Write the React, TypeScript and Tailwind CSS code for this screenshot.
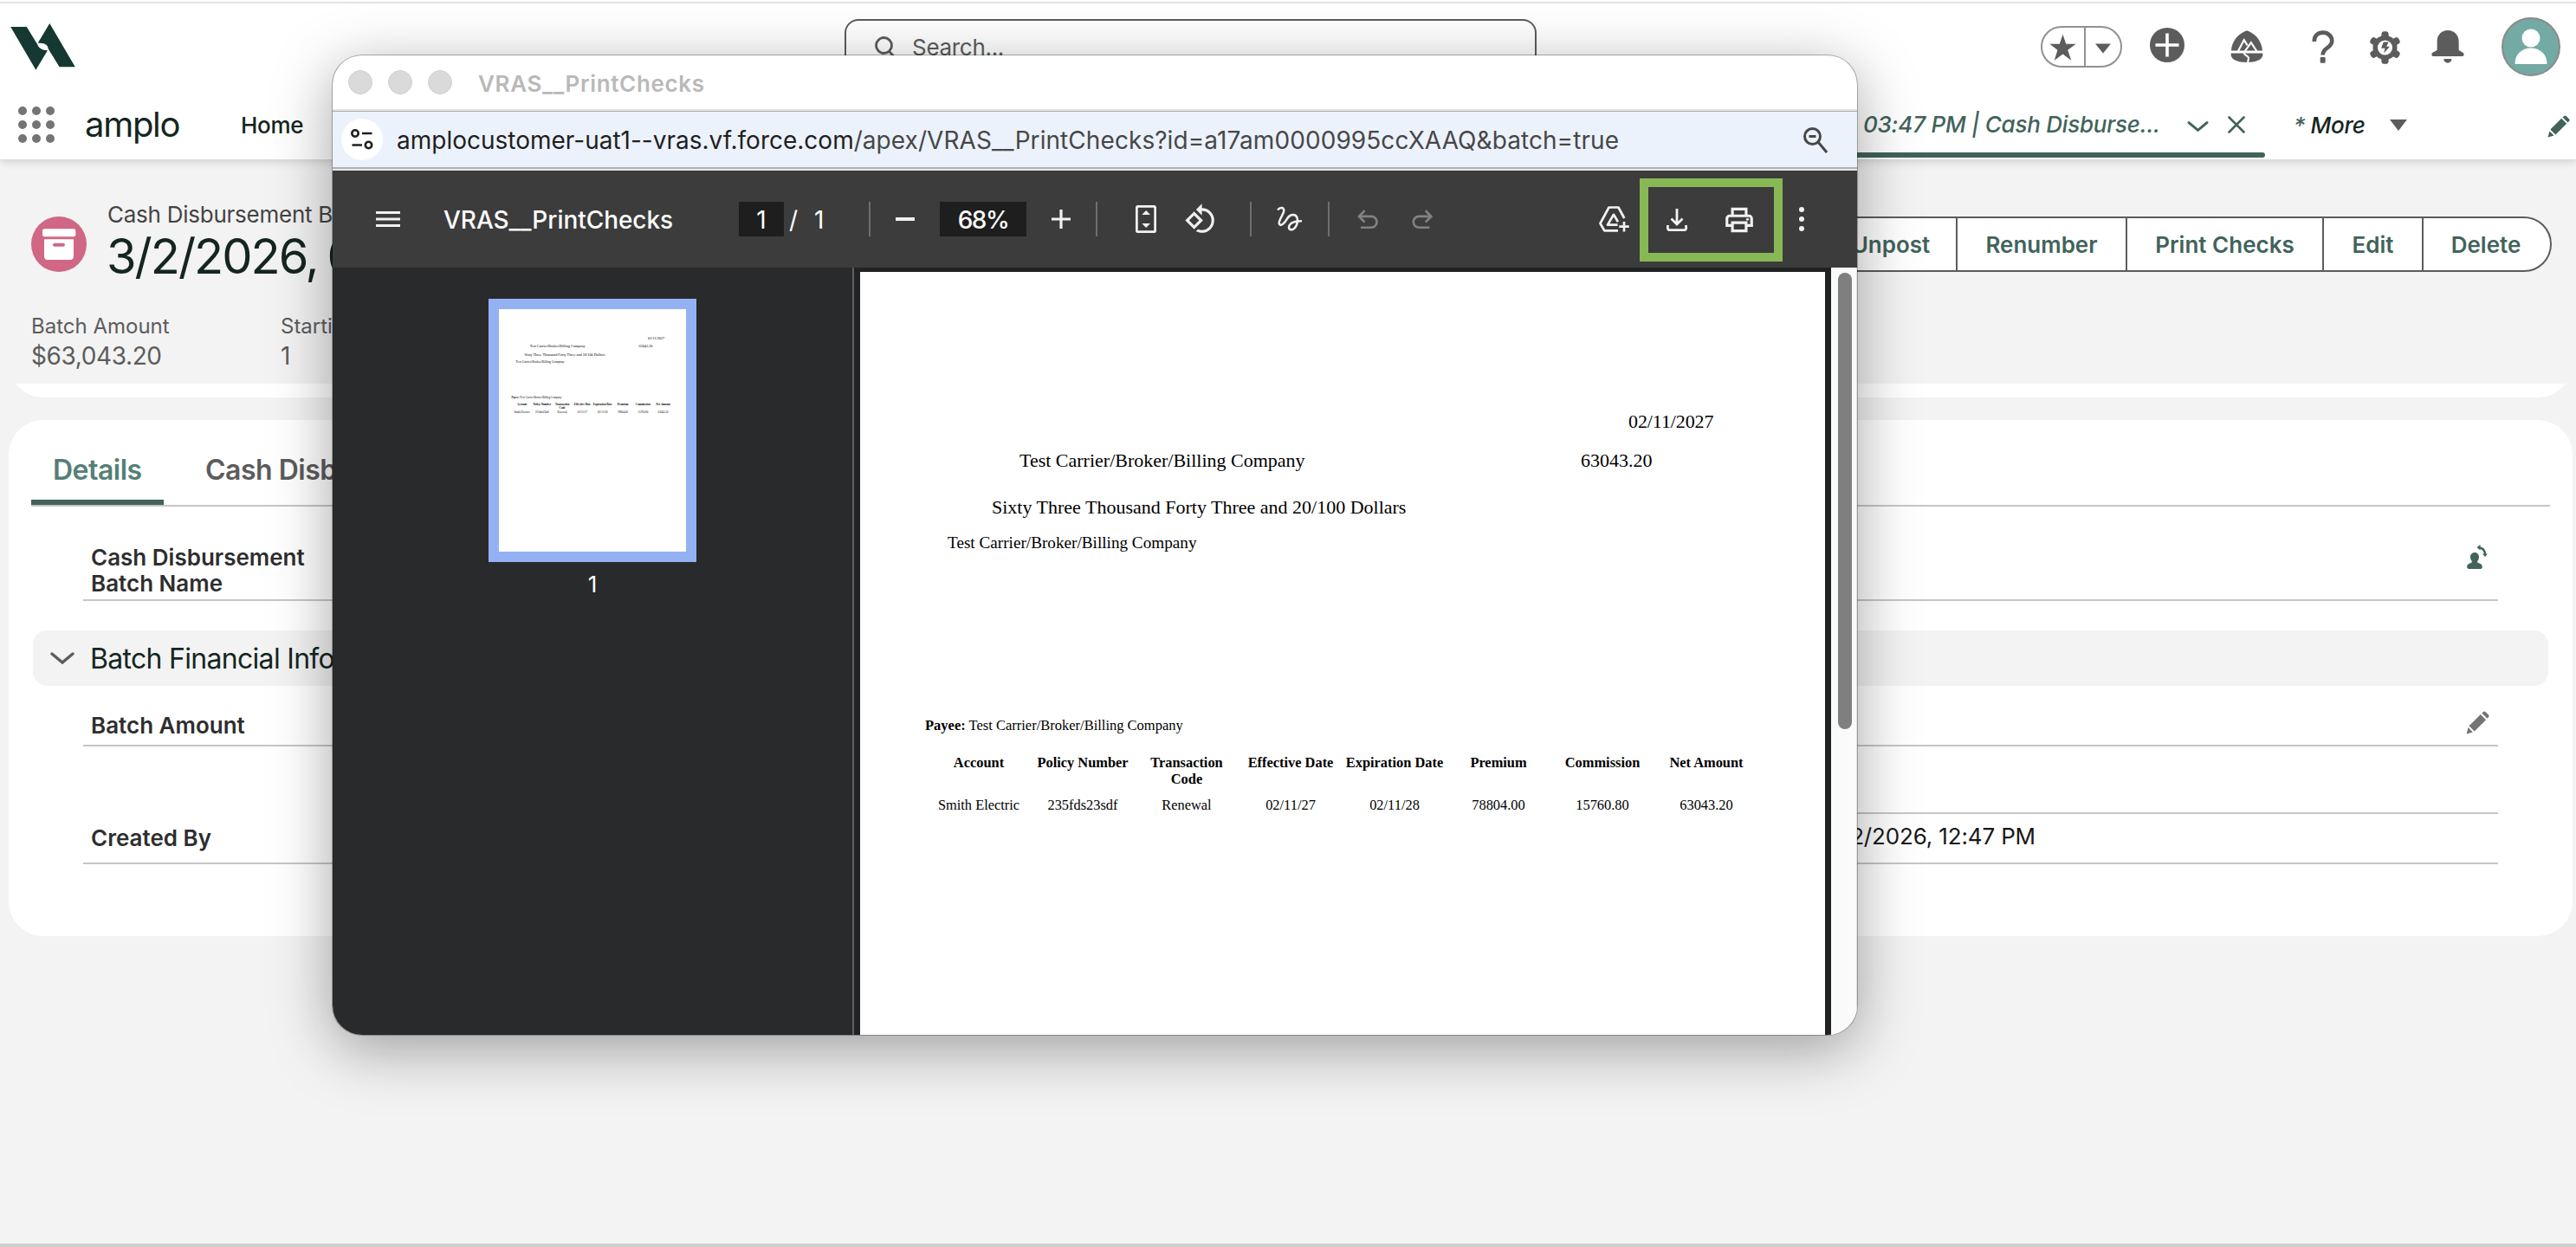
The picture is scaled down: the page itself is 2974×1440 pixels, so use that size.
import clsx from 'clsx'
import { MdOutlinePrint, MdRotate90DegreesCcw } from 'react-icons/md'

const columns = [
  { label: 'Account', value: 'Smith Electric' },
  { label: 'Policy Number', value: '235fds23sdf' },
  { label: 'Transaction Code', value: 'Renewal' },
  { label: 'Effective Date', value: '02/11/27' },
  { label: 'Expiration Date', value: '02/11/28' },
  { label: 'Premium', value: '78804.00' },
  { label: 'Commission', value: '15760.80' },
  { label: 'Net Amount', value: '63043.20' },
]

const actions = [
  { label: 'Unpost', width: 'w-[150px]' },
  { label: 'Renumber', width: 'w-[196px]' },
  { label: 'Print Checks', width: 'w-[227px]' },
  { label: 'Edit', width: 'w-[115px]' },
  { label: 'Delete', width: 'w-[148px]' },
]

function Pencil({ className }: { className?: string }) {
  return (
    <svg viewBox="0 0 26 26" fill="currentColor" className={className}>
      <path d="M.6 25.4l1.8-7 5.2 5.2z" />
      <path d="M3.4 16.6L16.2 3.8l6 6L9.4 22.6z" />
      <path d="M17.6 2.4L19.2.9c.8-.7 1.7-.7 2.4 0l3.5 3.5c.7.7.7 1.6 0 2.4l-1.5 1.6z" />
    </svg>
  )
}

function ChevronDown({ className }: { className?: string }) {
  return (
    <svg viewBox="0 0 28 16" fill="none" stroke="currentColor" strokeWidth="3.4" strokeLinecap="round" className={className}>
      <path d="M2 3l12 10L26 3" />
    </svg>
  )
}

function Logo() {
  return (
    <svg viewBox="38 81 225 163" fill="#163832" className="ml-[12px] h-[54px] w-[75px]">
      <path d="M38 93h56l38 62c4 12 15 20 35 20l-41 68z" />
      <path d="M174 81l89 152h-55l-39-64c0-12-12-22-36-19z" />
    </svg>
  )
}

function GlobalHeader() {
  return (
    <div className="flex h-[100px] items-center text-[#5c5c5c]">
      <Logo />
      <div className="ml-[888px] flex h-16 w-[799px] items-center rounded-2xl border-2 border-[#5c5c5c] bg-white">
        <svg viewBox="0 0 24 24" fill="none" stroke="currentColor" strokeWidth="2.8" className="ml-[32px] size-6">
          <circle cx="11.5" cy="10.5" r="9" />
          <path d="M17.5 17.5l5 5" />
        </svg>
        <span className="ml-[20px] text-[26px] tracking-[-0.3px]">Search...</span>
      </div>

      <div className="ml-[582px] flex h-12 w-[94px] rounded-full border-2 border-[#919191]">
        <div className="flex w-[50px] items-center border-r-2 border-[#919191] pl-[8px]">
          <svg viewBox="80 86 92 92" fill="currentColor" className="size-[31px]">
            <path d="M126 88l11 33h34l-28 21 12 35-29-21-29 21 11-35-27-21h34z" />
          </svg>
        </div>
        <svg viewBox="0 0 18 11" fill="currentColor" className="ml-[11px] mt-[18px] h-[12px] w-[18px]">
          <path d="M0 0h18L9 11z" />
        </svg>
      </div>

      <svg viewBox="0 0 40 40" className="mb-1 ml-[32px] size-10">
        <circle cx="20" cy="20" r="20" fill="#5c5c5c" />
        <path d="M20 6.5v27M6.5 20h27" stroke="#fff" strokeWidth="3.6" />
      </svg>

      <svg viewBox="704 76 116 114" className="ml-[53px] size-[38px]">
        <path d="M707 147c2-36 26-60 55-71 30 11 52 35 55 71zM706 156h112v7c-2 16-24 25-56 25s-54-9-56-25z" fill="#5c5c5c" />
        <path d="M731 149l21-40 12 19M755 149l22-31 20 31M752 154c-1 10 18 10 16 21l-3 14" fill="none" stroke="#fff" strokeWidth="6.5" />
      </svg>

      <svg viewBox="988 74 78 115" className="ml-[56px] h-[38px] w-[26px]">
        <path d="M996 113c0-20 13-31 31-31s31 13 31 29c0 26-32 22-32 49" fill="none" stroke="#5c5c5c" strokeWidth="14" />
        <rect x="1017" y="168" width="18" height="20" rx="3" fill="#5c5c5c" />
      </svg>

      <svg viewBox="1188 80 108 110" className="ml-[40px] mt-0.5 h-[38px] w-[37px]">
        <g fill="#5c5c5c">
          <rect x="1230" y="80" width="24" height="110" rx="10" />
          <rect x="1230" y="80" width="24" height="110" rx="10" transform="rotate(60 1242 135)" />
          <rect x="1230" y="80" width="24" height="110" rx="10" transform="rotate(120 1242 135)" />
          <circle cx="1242" cy="135" r="41" />
        </g>
        <circle cx="1242" cy="135" r="25" fill="#fff" />
        <path d="M1237 116h17l-7 15h11l-20 23 4-17h-13z" fill="#5c5c5c" />
      </svg>

      <svg viewBox="1402 75 112 114" fill="currentColor" className="ml-[35px] size-[38px]">
        <path d="M1421 142v-29c0-22 16-38 37-38s38 16 38 38v29c0 6 18 8 18 16 0 5-3 7-8 7h-96c-5 0-8-2-8-7 0-8 19-10 19-16zM1444 174h27c1 8-7 14-13 14-7 0-14-6-14-14z" />
      </svg>

      <svg viewBox="0 0 68 68" className="ml-[43px] size-[68px]">
        <circle cx="34" cy="34" r="33" fill="#73aaa4" stroke="#8a8a8a" strokeWidth="2" />
        <circle cx="34" cy="24" r="10.5" fill="#fff" />
        <path d="M15.5 53c0-10 8-17.5 18.5-17.5S52.5 43 52.5 53c0 .6-.4 1-1 1h-35c-.6 0-1-.4-1-1z" fill="#fff" />
      </svg>
    </div>
  )
}

function NavBar() {
  return (
    <div className="flex h-20 items-center text-[26px] font-medium">
      <div className="ml-[21px] grid grid-cols-3 gap-[6px]">
        {Array.from({ length: 9 }, (_, i) => (
          <span key={i} className="size-[10px] rounded-full bg-[#747474]" />
        ))}
      </div>
      <span className="ml-[35px] w-[180px] text-[40px] font-normal tracking-[-1.3px] text-[#14261f]">amplo</span>
      <span className="w-[1870px] tracking-[-0.3px] text-[#14261f]">Home</span>

      <div className="-ml-[100px] flex h-full w-[567px] flex-col justify-end pb-[2px]">
        <div className="flex min-h-0 flex-1 items-center pl-[103px] pt-[7px] text-[#41635b]">
          <span className="w-[374px] italic tracking-[-0.22px]">03:47 PM | Cash Disburse...</span>
          <ChevronDown className="mt-1 h-[14px] w-[25px]" />
          <svg viewBox="0 0 20 20" stroke="currentColor" strokeWidth="2.6" strokeLinecap="round" className="ml-[22px] size-5 shrink-0">
            <path d="M1.5 1.5l17 17M18.5 1.5l-17 17" />
          </svg>
        </div>
        <div className="h-[6px] shrink-0 rounded-r-full bg-[#41635b]" />
      </div>

      <span className="ml-[33px] mt-px italic text-[#41635b]">*</span>
      <span className="ml-[6px] mt-px italic tracking-[-0.3px] text-[#14261f]">More</span>
      <svg viewBox="0 0 20 13" fill="#5c5c5c" className="ml-[29px] h-[13px] w-5">
        <path d="M0 0h20L10 13z" />
      </svg>
      <Pencil className="ml-auto mr-[7px] mt-1 size-[26px] text-[#41635b]" />
    </div>
  )
}

function RecordHeader() {
  return (
    <>
      <div className="flex pt-12">
        <svg viewBox="108 750 192 192" className="ml-[36px] mt-[18px] size-16">
          <circle cx="204" cy="846" r="96" fill="#d06785" />
          <rect x="147" y="793" width="115" height="27" rx="7" fill="#fff" />
          <path d="M153 829h102v59c0 7-4 12-11 12h-80c-7 0-11-5-11-12z" fill="#fff" />
          <rect x="183" y="842" width="42" height="12" rx="6" fill="#d06785" />
        </svg>
        <div className="ml-[24px]">
          <div className="text-[26px] leading-8 tracking-[-0.25px] text-[#444]">Cash Disbursement Batch</div>
          <div className="ml-[-1px] text-[56px] leading-[64px] tracking-[-2px] text-[#14261f] [word-spacing:-3px]">3/2/2026, 03:47 PM</div>
        </div>
        <div className="ml-auto mr-[28px] mt-[18px] flex h-16 overflow-hidden rounded-r-full border-2 border-[#5c5c5c] bg-white">
          {actions.map((action, i) => (
            <button
              key={action.label}
              className={clsx(
                'text-[26px] font-semibold text-[#41635b]',
                i > 0 && 'border-l-2 border-[#5c5c5c]',
                i === actions.length - 1 && 'pr-[2px]',
                action.width,
              )}
            >
              {action.label}
            </button>
          ))}
        </div>
      </div>
      <div className="mt-[33px] flex text-[#5c5c5c]">
        <div className="ml-[36px] w-[288px]">
          <div className="text-2xl leading-8">Batch Amount</div>
          <div className="text-[28px] leading-9 tracking-[-0.4px]">$63,043.20</div>
        </div>
        <div>
          <div className="text-2xl leading-8">Starting Check Number</div>
          <div className="text-[28px] leading-9">1</div>
        </div>
      </div>
    </>
  )
}

function Label({ children, className }: { children: React.ReactNode; className?: string }) {
  return (
    <div className={clsx('border-b-2 border-[#c6c6c6] pl-[9px] text-[26px] font-semibold leading-[30px] text-[#2e2e2e]', className)}>
      {children}
    </div>
  )
}

function DetailsCard() {
  return (
    <div className="mx-[10px] mr-1 mt-[26px] h-[596px] rounded-[40px] bg-white pt-[38px]">
      <div className="mx-[26px] flex border-b-2 border-[#c6c6c6] text-[32px] font-semibold leading-10 tracking-[-0.5px]">
        <div className="w-[153px] border-b-[6px] border-[#41635b] pb-[14px] pl-[25px] text-[#547f77]">Details</div>
        <div className="ml-[48px] text-[#5c5c5c]">Cash Disbursements</div>
      </div>

      <div className="ml-[86px] mr-[86px] mt-11 grid grid-cols-2">
        <Label className="pb-[3px]">
          Cash Disbursement
          <br />
          Batch Name
        </Label>
        <div className="flex justify-end border-b-2 border-[#c6c6c6] pr-[12px]">
          <svg viewBox="0 0 24 28" fill="#41635b" className="h-[28px] w-6">
            <path d="M9 9c3 0 5 2.4 5 5.2 0 2-.8 3.6-1.8 4.8v1.6c2.4 1 5.6 2 5.6 5 0 1.2-.6 2.4-2 2.4H2.2C1 28 .2 27 .2 25.6c0-3 3.2-4 5.6-5V19C4.8 17.8 4 16.2 4 14.2 4 11.4 6 9 9 9z" />
            <path d="M14 3.2c4 .6 6.8 3.6 7 8" fill="none" stroke="#41635b" strokeWidth="2.4" />
            <path d="M15.5 0v6.4L11.5 3zM18 10.5h6L21 14z" />
          </svg>
        </div>
      </div>

      <div className="mx-[28px] mt-[34px] flex h-16 items-center rounded-2xl bg-[#f3f3f3]">
        <ChevronDown className="ml-[20px] h-4 w-7 text-[#5c5c5c]" />
        <span className="ml-[18px] pt-[2px] text-[32px] tracking-[-0.7px] text-[#14261f]">Batch Financial Information</span>
      </div>

      <div className="ml-[86px] mr-[86px] mt-[31px] grid grid-cols-2">
        <Label className="pb-[7px]">Batch Amount</Label>
        <div className="flex justify-end border-b-2 border-[#c6c6c6] pr-[10px]">
          <Pencil className="-mt-0.5 size-[27px] text-[#747474]" />
        </div>
        <div className="h-[78px]" />
        <div className="border-b-2 border-[#c6c6c6]" />
        <Label className="pb-[13px] pt-[13px]">Created By</Label>
        <div className="border-b-2 border-[#c6c6c6] pl-[621px] pt-[11px] text-[26px] leading-[30px] tracking-[-0.15px] text-[#181818]">
          3/2/2026, 12:47 PM
        </div>
      </div>
    </div>
  )
}

// Check stub, drawn at 1114px wide and scaled down for the sidebar thumbnail
function CheckPage({ className }: { className?: string }) {
  return (
    <div className={clsx("h-[1444px] w-[1114px] shrink-0 bg-white pt-[161px] font-['Liberation_Serif',serif] text-[22px] leading-6 text-black", className)}>
      <div className="pl-[887px] tracking-[-0.1px]">02/11/2027</div>
      <div className="mt-[21px] flex">
        <span className="ml-[184px] w-[648px]">Test Carrier/Broker/Billing Company</span>
        <span>63043.20</span>
      </div>
      <div className="mt-[30px] pl-[152px]">Sixty Three Thousand Forty Three and 20/100 Dollars</div>
      <div className="mt-[17px] pl-[101px] text-[19.2px]">Test Carrier/Broker/Billing Company</div>
      <div className="mt-[189px] pl-[75px] text-[16.5px] leading-5">
        <b>Payee:</b> Test Carrier/Broker/Billing Company
      </div>
      <div className="ml-[77px] mt-[23px] grid w-[960px] grid-cols-8 text-center text-[16.4px]">
        {columns.map((c) => (
          <div key={c.label} className="whitespace-normal px-[2px] font-bold leading-[19px]">
            {c.label}
          </div>
        ))}
        {columns.map((c) => (
          <div key={c.label} className="mt-[11px] leading-5">
            {c.value}
          </div>
        ))}
      </div>
    </div>
  )
}

function Divider({ className }: { className?: string }) {
  return <div className={clsx('h-10 w-[2px] shrink-0 bg-[#6e6e6e]', className)} />
}

function PdfToolbar() {
  return (
    <div className="flex h-[112px] items-center bg-[#3c3c3c] text-[28px] font-medium text-white">
      <svg viewBox="0 0 28 18" stroke="#f1f1f1" strokeWidth="3" className="ml-[50px] h-[18px] w-7">
        <path d="M0 1.5h28M0 9h28M0 16.5h28" />
      </svg>
      <span className="ml-[50px] w-[341px] pt-[2px] tracking-[-0.05px]">VRAS__PrintChecks</span>
      <div className="flex h-10 w-[52px] items-center justify-center bg-[#1e1e1e] pt-px font-normal">1</div>
      <div className="flex w-[98px] pl-[6px] pt-px font-normal">
        <span className="w-[29px]">/</span>
        <span>1</span>
      </div>
      <Divider />
      <div className="ml-[29px] h-[4px] w-[22px] bg-[#f1f1f1]" />
      <div className="ml-[29px] flex h-10 w-[100px] items-center justify-center bg-[#1e1e1e] pt-px tracking-[-1.5px]">68%</div>
      <svg viewBox="0 0 22 22" stroke="#f1f1f1" strokeWidth="3.2" className="ml-[29px] size-[22px]">
        <path d="M11 0v22M0 11h22" />
      </svg>
      <Divider className="ml-[29px]" />

      <svg viewBox="93 54 72 96" fill="#f1f1f1" className="ml-[44px] h-8 w-6">
        <rect x="97" y="58" width="64" height="88" rx="5" fill="none" stroke="#f1f1f1" strokeWidth="8.5" />
        <path d="M115 87h29l-14.5-15zM115 117h29l-14.5 15z" />
      </svg>
      <MdRotate90DegreesCcw className="ml-[32px] size-[38px] text-[#f1f1f1]" />
      <Divider className="ml-[38px]" />

      <svg viewBox="580 55 95 95" fill="none" stroke="#f1f1f1" strokeWidth="7.5" className="ml-[28px] size-8">
        <path d="M586 71c9-10 24-10 21 6-4 14-17 28-16 41 4 12 18 0 27-16 10-18 30-18 35-4 4 18-5 38-18 41-13 0-13-12-5-20 9-9 22-10 39-10" />
      </svg>
      <Divider className="ml-[28px]" />

      <svg viewBox="855 65 85 80" fill="none" stroke="#828282" strokeWidth="8" className="ml-[30px] h-[27px] w-[28px]">
        <path d="M873 133h37a19.5 19.5 0 0 0 0-39h-44M887 74l-20 20 20 20" />
      </svg>
      <svg viewBox="1045 65 85 80" fill="none" stroke="#828282" strokeWidth="8" className="ml-[35px] h-[27px] w-[28px]">
        <path d="M1113 133h-37a19.5 19.5 0 0 1 0-39h44M1099 74l20 20-20 20" />
      </svg>

      <svg viewBox="0 0 35 30" fill="none" stroke="#f1f1f1" strokeWidth="2.7" strokeLinejoin="round" className="ml-[190px] h-[30px] w-[35px]">
        <path d="M29.3 14L22.5 1.5h-11L1.5 20l4.8 8.4H22" />
        <path d="M22 18.2L17 9.8l-7 11.8h11.5" />
        <path d="M29 18v11.5M23.3 23.7h11.5" />
      </svg>
      <div className="ml-[12px] mt-[2px] flex h-24 w-[165px] items-center border-[10px] border-[#88b854]">
        <svg viewBox="0 0 24 26" fill="none" stroke="#f1f1f1" strokeWidth="2.8" className="ml-[20px] size-[26px]">
          <path d="M12 0v17M5.5 11.5l6.5 6.5 6.5-6.5M1.4 19v3.6c0 1.2.8 2 2 2h17.2c1.2 0 2-.8 2-2V19" />
        </svg>
        <MdOutlinePrint className="ml-[40px] size-[38px] text-[#f1f1f1]" />
      </div>
      <div className="ml-[19px] flex flex-col gap-[5px]">
        <span className="size-[6px] rounded-full bg-[#f1f1f1]" />
        <span className="size-[6px] rounded-full bg-[#f1f1f1]" />
        <span className="size-[6px] rounded-full bg-[#f1f1f1]" />
      </div>
    </div>
  )
}

function PopupWindow() {
  return (
    <div className="absolute left-[384px] top-[64px] flex h-[1131px] w-[1760px] flex-col overflow-hidden rounded-[34px] bg-white shadow-[0_0_0_1px_rgba(0,0,0,0.28),0_16px_70px_rgba(0,0,0,0.36)]">
      <div className="flex h-[62px] items-center">
        <span className="ml-[18px] size-7 rounded-full border border-[#d0d0d0] bg-[#dadada]" />
        <span className="ml-[18px] size-7 rounded-full border border-[#d0d0d0] bg-[#dadada]" />
        <span className="ml-[18px] size-7 rounded-full border border-[#d0d0d0] bg-[#dadada]" />
        <span className="ml-[30px] mt-0.5 text-[26px] font-semibold tracking-[0.65px] text-[#b9b9b9]">VRAS__PrintChecks</span>
      </div>
      <div className="h-[2px] shrink-0 bg-[#e3e3e3]" />
      <div className="flex h-[67px] items-center border-b-2 border-t border-b-[#b0b1b3] border-t-[#a9abad] bg-[#ecf2fb]">
        <div className="ml-[10px] flex size-12 items-center justify-center rounded-full bg-white">
          <svg viewBox="0 0 26 24" fill="none" stroke="#1f1f1f" strokeWidth="2.6" className="h-6 w-[26px]">
            <circle cx="5" cy="5" r="3.7" />
            <path d="M13 5h11.5M1.5 18.5H13" />
            <circle cx="20.5" cy="18.5" r="3.7" />
          </svg>
        </div>
        <span className="ml-[16px] pt-[2px] text-[28px] text-[#1f1f1f]">
          amplocustomer-uat1--vras.vf.force.com
          <span className="tracking-[0.07px] text-[#474747]">/apex/VRAS__PrintChecks?id=a17am0000995ccXAAQ&amp;batch=true</span>
        </span>
        <svg viewBox="0 0 28 32" fill="none" stroke="#474747" strokeWidth="3" className="ml-auto mr-[34px] mt-1 h-8 w-7">
          <circle cx="10.5" cy="10.5" r="9" />
          <path d="M6.5 10.5h8M17 17l10 12" />
        </svg>
      </div>
      <div className="h-[2px] shrink-0 bg-[#e6e6e6]" />
      <PdfToolbar />
      <div className="flex min-h-0 flex-1">
        <div className="flex w-[600px] flex-col items-start bg-[#282a2c] pt-9">
          <div className="ml-[180px] h-[304px] w-60 border-[12px] border-[#94b2f3]">
            <div className="h-[280px] w-[216px] overflow-hidden bg-white">
              <CheckPage className="origin-top-left scale-[0.194]" />
            </div>
          </div>
          <div className="ml-[180px] mt-2 w-60 text-center text-[26px] leading-9 text-white">1</div>
        </div>
        <div className="flex flex-1 overflow-hidden border-l-2 border-[#5f5f5f] bg-[#212223] pl-[7px] pt-[5px]">
          <CheckPage />
        </div>
        <div className="w-[30px] border-r border-[#e2e2e2] bg-[#fafafa] pl-2 pt-[6px]">
          <div className="h-[527px] w-4 rounded-full bg-[#7f7f7f]" />
        </div>
      </div>
    </div>
  )
}

export default function App() {
  return (
    <div className="relative h-[1440px] w-[2974px] overflow-hidden whitespace-nowrap bg-[#f3f3f3] font-[Inter,sans-serif]">
      <div className="bg-white pt-[2px] shadow-[0_2px_10px_rgba(0,0,0,0.16)]">
        <div className="h-[2px] bg-[#e2e2e2]" />
        <GlobalHeader />
        <NavBar />
      </div>
      <RecordHeader />
      <div className="mx-[10px] mr-1 mt-[14px] flex h-4 flex-col justify-end overflow-hidden">
        <div className="h-[120px] shrink-0 rounded-[40px] bg-white" />
      </div>
      <DetailsCard />
      <div className="mt-[355px] h-1 bg-[#cfcfcf]" />
      <PopupWindow />
    </div>
  )
}
